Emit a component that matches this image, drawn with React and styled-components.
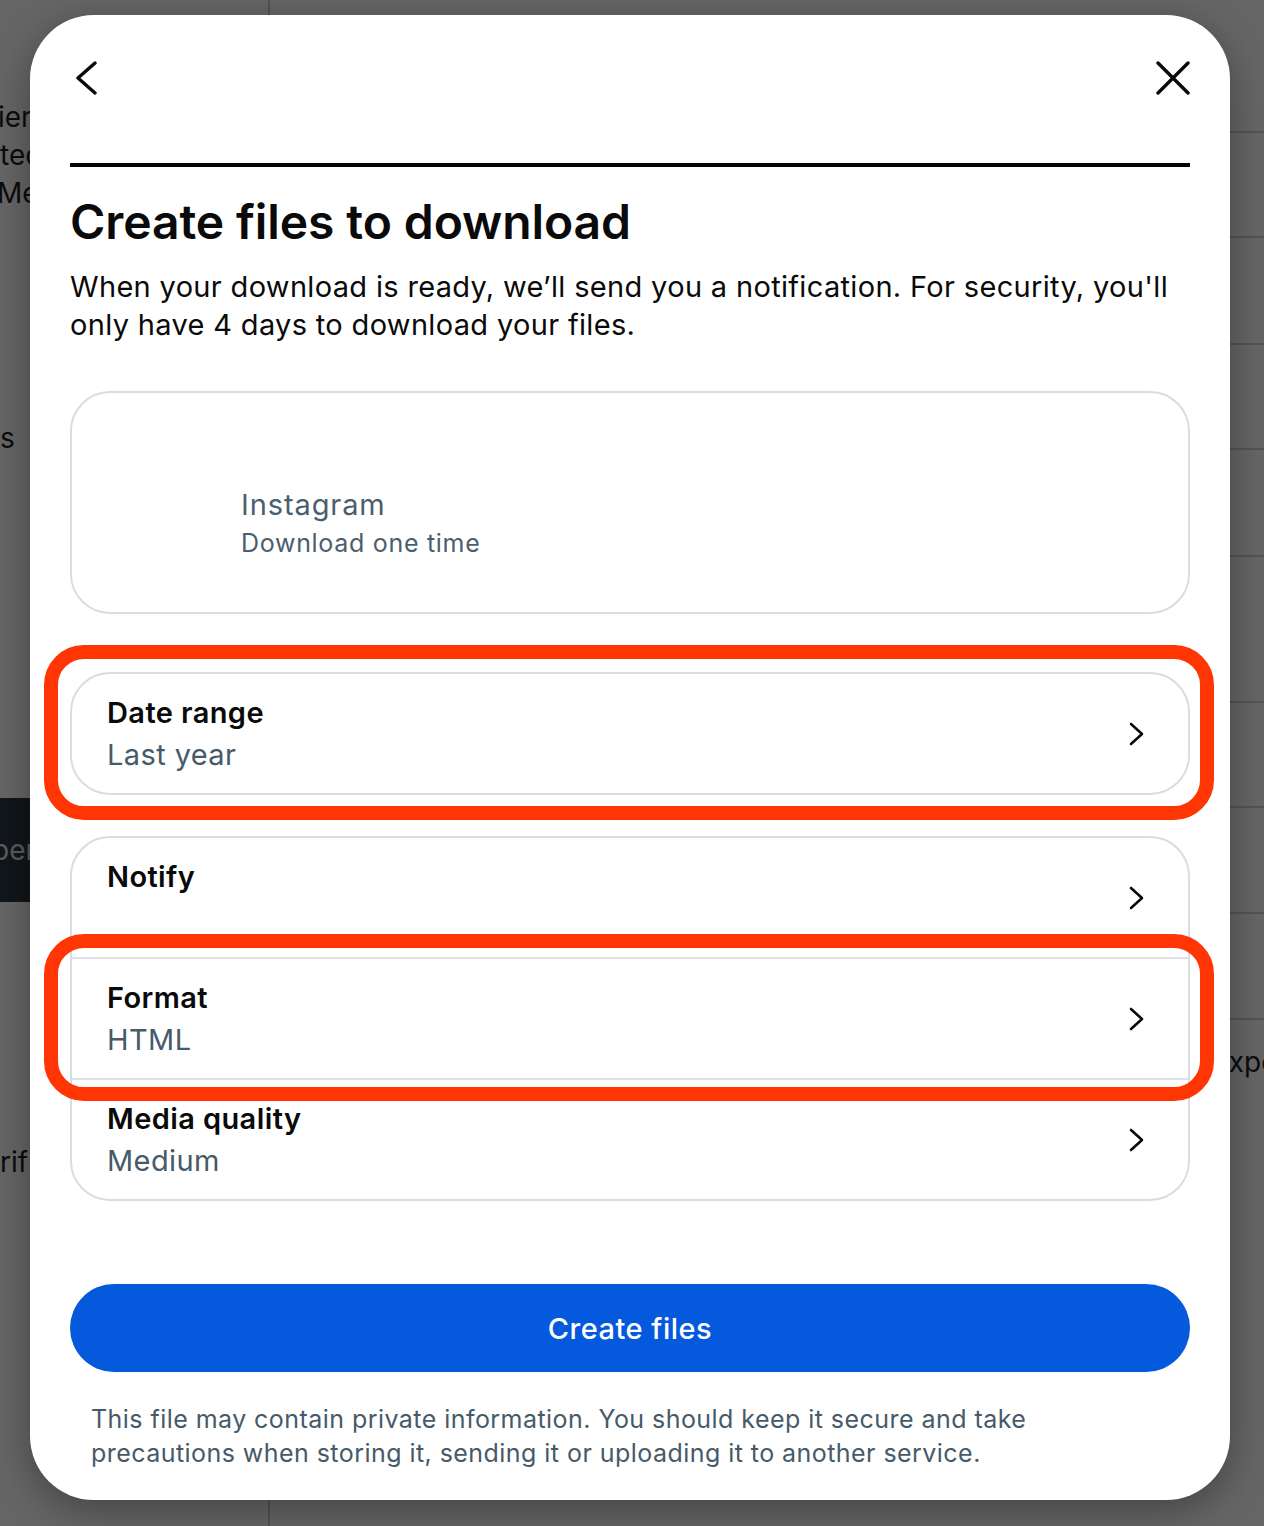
import React from "react"
import styled, { createGlobalStyle } from "styled-components"

const GlobalStyle = createGlobalStyle`
html, body {
  margin: 0;
  padding: 0;
}
body {
  width: 1264px;
  height: 1526px;
  overflow: hidden;
  background: #ffffff;
  font-family: Inter, "Noto Sans", sans-serif;
}
`

// page that sits behind the dialog
const Page = styled.div`
position: relative;
width: 1264px;
height: 1526px;
display: flex;
overflow: hidden;
background: #ffffff;
`
const SidePane = styled.div`
width: 268px;
flex-shrink: 0;
border-right: 2px solid #c9ced6;
display: flex;
flex-direction: column;
padding-top: 98px;
font-size: 28px;
line-height: 38px;
color: #1c1e21;
`
const SideLine = styled.div`
margin-top: ${p => p.$gap || 0}px;
margin-left: ${p => p.$shift || 0}px;
white-space: nowrap;
`
const SideBlock = styled.div`
margin-top: ${p => p.$gap || 0}px;
height: 104px;
flex-shrink: 0;
display: flex;
align-items: center;
background: #2c3843;
color: #e2e5ea;
white-space: nowrap;
margin-left: -8px;
`
const MainPane = styled.div`
flex: 1;
min-width: 0;
display: flex;
flex-direction: column;
overflow: hidden;
`
const ListRow = styled.div`
height: ${p => p.$h}px;
flex-shrink: 0;
box-sizing: border-box;
border-bottom: ${p => (p.$last ? "none" : "2px solid #cfd3da")};
display: flex;
align-items: center;
font-size: 28px;
color: #1c1e21;
`
const RowLabel = styled.span`
margin-left: 942px;
white-space: nowrap;
`
const Overlay = styled.div`
position: absolute;
inset: 0;
background: rgba(0, 0, 0, 0.6);
`

// dialog
const Dialog = styled.div`
position: absolute;
left: 30px;
top: 15px;
width: 1200px;
height: 1485px;
box-sizing: border-box;
padding: 0 40px;
background: #ffffff;
border-radius: 64px;
box-shadow: 0 10px 40px rgba(0, 0, 0, 0.35);
display: flex;
flex-direction: column;
`
const Header = styled.div`
height: 125px;
display: flex;
align-items: center;
justify-content: space-between;
`
const IconButton = styled.button`
width: 34px;
height: 34px;
padding: 0;
border: none;
background: none;
display: flex;
align-items: center;
justify-content: center;
cursor: pointer;
`
const Rule = styled.div`
margin-top: 23px;
height: 4px;
background: #050505;
`
const Title = styled.h1`
margin: 25px 0 0;
font-size: 48px;
line-height: 60px;
font-weight: 600;
letter-spacing: -0.1px;
color: #0a0a0a;
`
const Description = styled.p`
margin: 16px 0 0;
font-size: 29px;
line-height: 38px;
font-weight: 400;
letter-spacing: 0.33px;
color: #0a0a0a;
`
const Card = styled.div`
margin-top: ${p => p.$mt}px;
border: 2px solid #d7dde4;
border-radius: 40px;
overflow: hidden;
background: #ffffff;
`
const SourceBody = styled.div`
height: 126px;
padding: 93px 36px 0;
display: flex;
gap: 28px;
`
const SourceThumb = styled.div`
width: 105px;
height: 105px;
margin-top: -60px;
`
const SourceText = styled.div`
display: flex;
flex-direction: column;
color: #4b5e6d;
`
const SourceName = styled.div`
font-size: 29px;
line-height: 38px;
letter-spacing: 0.9px;
`
const SourceNote = styled.div`
font-size: 25px;
line-height: 34px;
letter-spacing: 0.7px;
margin-top: 2px;
`
const Option = styled.div`
display: flex;
align-items: center;
justify-content: space-between;
padding: 18px 42px 17px 35px;
& + & {
  border-top: 2px solid #dde2e8;
}
`
const OptionText = styled.div`
display: flex;
flex-direction: column;
font-size: 29px;
line-height: 42px;
letter-spacing: 0.4px;
`
const OptionTitle = styled.div`
font-weight: 600;
color: #0a0a0a;
`
const OptionValue = styled.div`
min-height: 42px;
color: #465a69;
`
const Marked = styled.div`
position: relative;
`
const Highlight = styled.div`
position: absolute;
left: -26px;
right: -24px;
top: ${p => p.$top}px;
bottom: ${p => p.$bottom}px;
border: 14px solid #ff3503;
border-radius: 40px;
pointer-events: none;
`
const CreateButton = styled.button`
margin-top: 83px;
height: 88px;
border: none;
border-radius: 44px;
background: #0459dc;
color: #ffffff;
font-family: Inter, "Noto Sans", sans-serif;
font-size: 29px;
font-weight: 500;
letter-spacing: 0.5px;
cursor: pointer;
`
const Footnote = styled.p`
margin: 30px 0 0;
padding: 0 80px 0 21px;
font-size: 25px;
line-height: 34px;
letter-spacing: 0.45px;
color: #465a69;
`

const BackIcon = () => (
  <svg width="24" height="34" viewBox="0 0 24 34" fill="none">
    <polyline points="20,2 3,17 20,32" stroke="#0a0a0a" strokeWidth="3.4" strokeLinecap="round" strokeLinejoin="round" />
  </svg>
)
const CloseIcon = () => (
  <svg width="34" height="34" viewBox="0 0 34 34" fill="none">
    <path d="M2 2 L32 32 M32 2 L2 32" stroke="#0a0a0a" strokeWidth="3.4" strokeLinecap="round" />
  </svg>
)
const Chevron = () => (
  <svg width="18" height="24" viewBox="0 0 18 24" fill="none">
    <polyline points="3,2 14,12 3,22" stroke="#0a0a0a" strokeWidth="2.6" strokeLinecap="round" strokeLinejoin="round" />
  </svg>
)

function OptionRow({ title, value }) {
  return (
    <Option>
      <OptionText>
        <OptionTitle>{title}</OptionTitle>
        <OptionValue>{value}</OptionValue>
      </OptionText>
      <Chevron />
    </Option>
  )
}

const rows = [133, 105, 107, 105, 107, 146, 105, 106, 106]

export default function App() {
  return (
    <Page>
      <GlobalStyle />
      <SidePane>
        <SideLine $shift={-2}>ier</SideLine>
        <SideLine>ted</SideLine>
        <SideLine $shift={-3}>Me</SideLine>
        <SideLine $gap={207}>s</SideLine>
        <SideBlock $gap={341}>per</SideBlock>
        <SideLine $gap={241}>rif</SideLine>
      </SidePane>
      <MainPane>
        {rows.map((h, i) => (
          <ListRow key={i} $h={h} />
        ))}
        <ListRow $h={84} $last>
          <RowLabel>Expert</RowLabel>
        </ListRow>
      </MainPane>
      <Overlay />

      <Dialog>
        <Header>
          <IconButton aria-label="Back"><BackIcon /></IconButton>
          <IconButton aria-label="Close"><CloseIcon /></IconButton>
        </Header>
        <Rule />
        <Title>Create files to download</Title>
        <Description>
          When your download is ready, we’ll send you a notification. For security, you'll only have 4 days to download your files.
        </Description>

        <Card $mt={47}>
          <SourceBody>
            <SourceThumb />
            <SourceText>
              <SourceName>Instagram</SourceName>
              <SourceNote>Download one time</SourceNote>
            </SourceText>
          </SourceBody>
        </Card>

        <Marked>
          <Card $mt={58}>
            <OptionRow title="Date range" value="Last year" />
          </Card>
          <Highlight $top={31} $bottom={-25} />
        </Marked>

        <Marked>
          <Card $mt={41}>
            <OptionRow title="Notify" value="" />
            <OptionRow title="Format" value="HTML" />
            <OptionRow title="Media quality" value="Medium" />
          </Card>
          <Highlight $top={139} $bottom={100} />
        </Marked>

        <CreateButton>Create files</CreateButton>
        <Footnote>
          This file may contain private information. You should keep it secure and take precautions when storing it, sending it or uploading it to another service.
        </Footnote>
      </Dialog>
    </Page>
  )
}
